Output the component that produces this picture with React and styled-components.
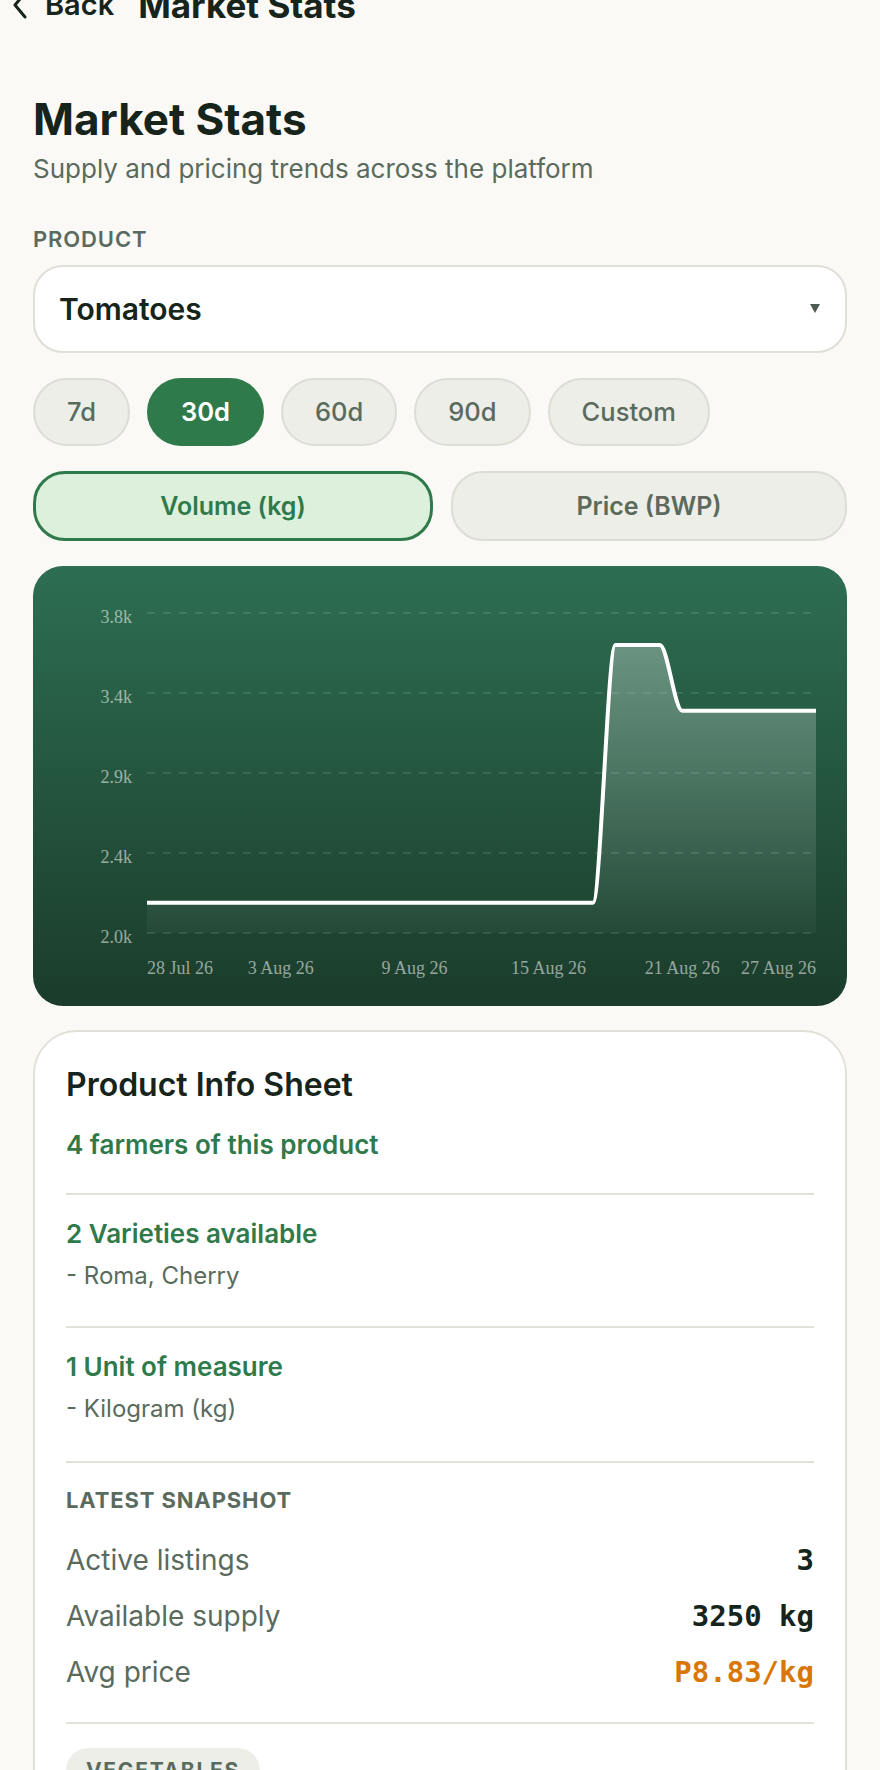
import React from "react";
import styled, { createGlobalStyle } from "styled-components";

const GlobalStyle = createGlobalStyle`
  html, body {
    margin: 0;
    padding: 0;
    background: #faf9f5;
  }
  body {
    font-family: Inter, "Noto Sans", sans-serif;
    color: #16241b;
  }
  * {
    box-sizing: border-box;
  }
`;

const RANGES = ["7d", "30d", "60d", "90d", "Custom"];

// one point per day, 28 Jul -> 27 Aug
const VOLUMES = [
  ...Array(21).fill(2170),
  ...Array(3).fill(3620),
  ...Array(7).fill(3250),
];

const Y_TICKS = ["3.8k", "3.4k", "2.9k", "2.4k", "2.0k"];
const X_TICKS = [
  { i: 0, label: "28 Jul 26" },
  { i: 6, label: "3 Aug 26" },
  { i: 12, label: "9 Aug 26" },
  { i: 18, label: "15 Aug 26" },
  { i: 24, label: "21 Aug 26" },
  { i: 30, label: "27 Aug 26" },
];

const SNAPSHOT = [
  { label: "Active listings", value: "3" },
  { label: "Available supply", value: "3250 kg" },
  { label: "Avg price", value: "P8.83/kg", accent: true },
];

const PLOT = { left: 114, right: 783, top: 47, bottom: 367 };
const MIN = 2000;
const MAX = 3800;

const xAt = (i) =>
  PLOT.left + (i * (PLOT.right - PLOT.left)) / (VOLUMES.length - 1);
const yAt = (v) =>
  PLOT.bottom - ((v - MIN) / (MAX - MIN)) * (PLOT.bottom - PLOT.top);

const buildLine = () => {
  const d = (PLOT.right - PLOT.left) / (VOLUMES.length - 1);
  let path = `M ${xAt(0)} ${yAt(VOLUMES[0])}`;
  for (let i = 1; i < VOLUMES.length; i++) {
    const x0 = xAt(i - 1);
    const y0 = yAt(VOLUMES[i - 1]);
    const x1 = xAt(i);
    const y1 = yAt(VOLUMES[i]);
    path += ` C ${x0 + d / 3} ${y0} ${x1 - d / 3} ${y1} ${x1} ${y1}`;
  }
  return path;
};

const VolumeChart = () => {
  const line = buildLine();
  const area = `${line} L ${PLOT.right} ${PLOT.bottom} L ${PLOT.left} ${PLOT.bottom} Z`;
  const step = (PLOT.bottom - PLOT.top) / (Y_TICKS.length - 1);

  return (
    <ChartSvg viewBox="0 0 814 440">
      <defs>
        <linearGradient id="volFill" x1="0" y1="0" x2="0" y2="1">
          <stop offset="0%" stopColor="#ffffff" stopOpacity="0.3" />
          <stop offset="100%" stopColor="#ffffff" stopOpacity="0.03" />
        </linearGradient>
      </defs>
      {Y_TICKS.map((t, k) => {
        const y = PLOT.top + k * step;
        return (
          <g key={t}>
            <line
              x1={PLOT.left}
              x2={PLOT.right}
              y1={y}
              y2={y}
              stroke="rgba(255,255,255,0.14)"
              strokeWidth="1.3"
              strokeDasharray="8 8"
            />
            <AxisText x={99} y={y + 10} textAnchor="end">
              {t}
            </AxisText>
          </g>
        );
      })}
      <path d={area} fill="url(#volFill)" />
      <path
        d={line}
        fill="none"
        stroke="#ffffff"
        strokeWidth="4"
        strokeLinejoin="round"
      />
      {X_TICKS.map(({ i, label }, k) => (
        <AxisText
          key={label}
          x={xAt(i)}
          y={408}
          textAnchor={
            k === 0 ? "start" : k === X_TICKS.length - 1 ? "end" : "middle"
          }
        >
          {label}
        </AxisText>
      ))}
    </ChartSvg>
  );
};

const App = () => {
  return (
    <>
      <GlobalStyle />
      <Page>
        <TopBar>
          <BackLink>
            <svg width="16" height="30" viewBox="0 0 16 30">
              <polyline
                points="13,3 3,15 13,27"
                fill="none"
                stroke="#16241b"
                strokeWidth="3"
                strokeLinecap="round"
                strokeLinejoin="round"
              />
            </svg>
            <span>Back</span>
          </BackLink>
          <TopTitle>Market Stats</TopTitle>
        </TopBar>

        <Title>Market Stats</Title>
        <Subtitle>Supply and pricing trends across the platform</Subtitle>

        <FieldLabel>Product</FieldLabel>
        <Select>
          <span>Tomatoes</span>
          <svg width="10" height="9" viewBox="0 0 10 9">
            <polygon points="0,0 10,0 5,9" fill="#4f5a52" />
          </svg>
        </Select>

        <Chips>
          {RANGES.map((r) => (
            <Chip key={r} $active={r === "30d"}>
              {r}
            </Chip>
          ))}
        </Chips>

        <Toggle>
          <ToggleButton $active>Volume (kg)</ToggleButton>
          <ToggleButton>Price (BWP)</ToggleButton>
        </Toggle>

        <ChartCard>
          <VolumeChart />
        </ChartCard>

        <InfoCard>
          <CardTitle>Product Info Sheet</CardTitle>
          <Highlight $top={24}>4 farmers of this product</Highlight>
          <Divider $top={31} />

          <Highlight $top={22}>2 Varieties available</Highlight>
          <Detail>- Roma, Cherry</Detail>
          <Divider $top={35} />

          <Highlight $top={22}>1 Unit of measure</Highlight>
          <Detail>- Kilogram (kg)</Detail>
          <Divider $top={37} />

          <SnapLabel>Latest snapshot</SnapLabel>
          <StatList>
            {SNAPSHOT.map((s) => (
              <StatRow key={s.label}>
                <StatLabel>{s.label}</StatLabel>
                <StatValue $accent={s.accent}>{s.value}</StatValue>
              </StatRow>
            ))}
          </StatList>
          <Divider $top={32} />

          <Tag>Vegetables</Tag>
        </InfoCard>
      </Page>
    </>
  );
};

const Page = styled.div`
  padding: 0 33px 40px;
  display: flex;
  flex-direction: column;
`;

const TopBar = styled.header`
  margin-top: -17px;
  height: 44px;
  display: flex;
  align-items: center;
  gap: 24px;
  padding-left: 12px;
  margin-left: -33px;
`;

const BackLink = styled.div`
  display: flex;
  align-items: center;
  gap: 17px;
  font-size: 29px;
  line-height: 1.2;
  font-weight: 600;
  color: #16241b;
`;

const TopTitle = styled.div`
  font-size: 35px;
  line-height: 1.2;
  font-weight: 700;
`;

const Title = styled.h1`
  margin: 66px 0 0;
  font-size: 44px;
  line-height: 1.2;
  font-weight: 700;
  color: #16241b;
`;

const Subtitle = styled.p`
  margin: 6px 0 0;
  font-size: 26px;
  line-height: 1.3;
  color: #5a6b5e;
`;

const FieldLabel = styled.div`
  margin-top: 40px;
  font-size: 22px;
  line-height: 1.2;
  font-weight: 600;
  letter-spacing: 0.04em;
  text-transform: uppercase;
  color: #5a6b5e;
`;

const Select = styled.div`
  margin-top: 13px;
  height: 88px;
  display: flex;
  align-items: center;
  justify-content: space-between;
  padding: 0 25px 0 24px;
  background: #ffffff;
  border: 2px solid #dfded7;
  border-radius: 30px;
  font-size: 30px;
  font-weight: 600;
  color: #16241b;
`;

const Chips = styled.div`
  margin-top: 25px;
  display: flex;
  gap: 17px;
`;

const Chip = styled.div`
  height: 68px;
  padding: 0 32px;
  display: flex;
  align-items: center;
  border-radius: 34px;
  border: 2px solid ${({ $active }) => ($active ? "#2f7a4a" : "#dcddd5")};
  background: ${({ $active }) => ($active ? "#2f7a4a" : "#eceee7")};
  color: ${({ $active }) => ($active ? "#ffffff" : "#5a6b5e")};
  font-size: 25.5px;
  font-weight: ${({ $active }) => ($active ? 600 : 500)};
`;

const Toggle = styled.div`
  margin-top: 25px;
  display: grid;
  grid-template-columns: 400px 1fr;
  gap: 18px;
`;

const ToggleButton = styled.div`
  height: 70px;
  display: flex;
  align-items: center;
  justify-content: center;
  border-radius: 32px;
  border: ${({ $active }) =>
    $active ? "3px solid #2f7a4a" : "2px solid #dcddd5"};
  background: ${({ $active }) => ($active ? "#dcf0dc" : "#eceee7")};
  color: ${({ $active }) => ($active ? "#2f7a4a" : "#5a6b5e")};
  font-size: 25px;
  font-weight: 600;
`;

const ChartCard = styled.div`
  margin-top: 25px;
  height: 440px;
  border-radius: 30px;
  overflow: hidden;
  background: linear-gradient(180deg, #2d6e51 0%, #1b3c2b 100%);
`;

const ChartSvg = styled.svg`
  display: block;
  width: 100%;
  height: 100%;
`;

const AxisText = styled.text`
  font-family: "Liberation Serif", "Times New Roman", serif;
  font-size: 18px;
  fill: rgba(255, 255, 255, 0.55);
`;

const InfoCard = styled.section`
  margin-top: 24px;
  background: #ffffff;
  border: 2px solid #e1e0d9;
  border-radius: 44px;
  padding: 34px 31px 40px;
  display: flex;
  flex-direction: column;
`;

const CardTitle = styled.h2`
  margin: 0;
  font-size: 32px;
  line-height: 1.2;
  font-weight: 600;
  color: #16241b;
`;

const Highlight = styled.div`
  margin-top: ${({ $top }) => $top}px;
  font-size: 26px;
  line-height: 1.3;
  font-weight: 600;
  color: #2f7a4a;
`;

const Detail = styled.div`
  margin-top: 9px;
  font-size: 24px;
  line-height: 1.3;
  color: #5a6b5e;
`;

const Divider = styled.hr`
  margin: ${({ $top }) => $top}px 0 0;
  height: 2px;
  border: 0;
  background: #e1e0d9;
`;

const SnapLabel = styled.div`
  margin-top: 24px;
  font-size: 22px;
  line-height: 1.2;
  font-weight: 700;
  letter-spacing: 0.04em;
  text-transform: uppercase;
  color: #5a6b5e;
`;

const StatList = styled.div`
  margin-top: 28px;
  display: flex;
  flex-direction: column;
  gap: 20px;
`;

const StatRow = styled.div`
  display: flex;
  align-items: baseline;
  justify-content: space-between;
  line-height: 36px;
`;

const StatLabel = styled.span`
  font-size: 28px;
  color: #5a6b5e;
`;

const StatValue = styled.span`
  font-family: "DejaVu Sans Mono", "Liberation Mono", monospace;
  font-size: 29px;
  font-weight: 700;
  color: ${({ $accent }) => ($accent ? "#d97706" : "#16241b")};
`;

const Tag = styled.span`
  margin-top: 24px;
  align-self: flex-start;
  padding: 10px 20px;
  border-radius: 24px;
  background: #eceee7;
  font-size: 21px;
  line-height: 1.2;
  font-weight: 700;
  letter-spacing: 0.08em;
  text-transform: uppercase;
  color: #5a6b5e;
`;

export default App;
